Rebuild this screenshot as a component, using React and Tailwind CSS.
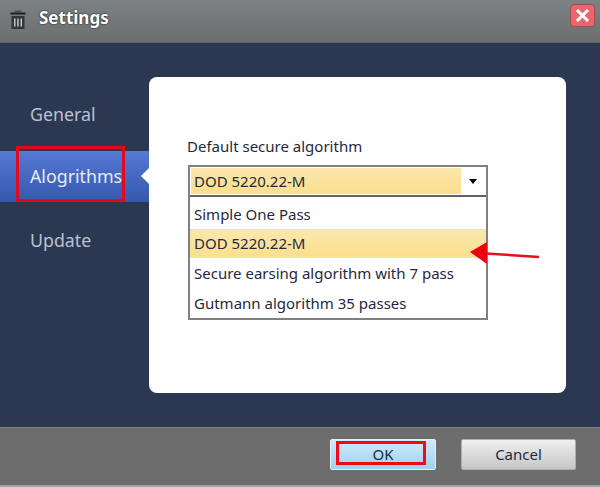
const font = { fontFamily: '"Noto Sans", sans-serif' };

function TrashIcon() {
  return (
    <svg width="16" height="20" viewBox="0 0 16 20" className="shrink-0 mt-[6px]">
      <rect x="0.5" y="2.5" width="15" height="2" fill="#1c1f22" />
      <rect x="4.5" y="0.5" width="7" height="1.5" fill="#4f5255" />
      <rect x="1.5" y="6" width="13" height="13" fill="#33373a" />
      <rect x="4" y="8.5" width="1.5" height="8" fill="#c4c6c8" />
      <rect x="7.2" y="8.5" width="1.5" height="8" fill="#c4c6c8" />
      <rect x="10.5" y="8.5" width="1.5" height="8" fill="#c4c6c8" />
    </svg>
  );
}

function CloseButton() {
  return (
    <div className="w-[25px] h-[23px] rounded-[4px] border border-[#a84a50] bg-[#e8666c] flex items-center justify-center">
      <svg width="15" height="13" viewBox="0 0 15 13">
        <path d="M3 2 L12 11 M12 2 L3 11" stroke="#ffffff" strokeWidth="3" strokeLinecap="square" />
      </svg>
    </div>
  );
}

function Option({ children, active }) {
  return (
    <div
      className={
        active
          ? "h-[29px] flex items-center pl-[4px] border-y border-[#dfe2e8] bg-gradient-to-b from-[#fbe7ae] to-[#fbdf8c]"
          : "h-[30px] flex items-center pl-[4px]"
      }
    >
      {children}
    </div>
  );
}

export default function App() {
  return (
    <div className="w-[600px] h-[487px] flex flex-col overflow-hidden relative" style={font}>
      <div className="h-[43px] shrink-0 flex items-start pt-[4px] pl-[10px] pr-[5px] gap-[13px] bg-gradient-to-b from-[#7c8286] to-[#6d6e6e] border-b border-[#5a6070]">
        <TrashIcon />
        <span className="text-white font-bold text-[17px] leading-[24px] mt-[2px] flex-1 [text-shadow:0_0_2px_#000]">Settings</span>
        <CloseButton />
      </div>

      <div className="flex-1 flex bg-[#2c3752] pt-[34px] pb-[34px] pr-[34px]">
        <div className="w-[149px] shrink-0 pt-[20px] text-[17.8px] text-[#b9c2d0]">
          <div className="h-[34px] flex items-center pl-[30px]">General</div>
          <div className="relative h-[51px] mt-[20px] flex items-center pl-[30px] text-[#e6ebf5] bg-gradient-to-b from-[#5679d6] to-[#3557ac]">
            Alogrithms
            <div className="absolute right-0 top-[17px] w-0 h-0 border-y-[8px] border-y-transparent border-r-[8px] border-r-white" />
          </div>
          <div className="h-[34px] mt-[21px] flex items-center pl-[30px]">Update</div>
        </div>

        <div className="flex-1 bg-white rounded-[8px] pl-[39px] pt-[59px]">
          <div className="-ml-[1px] text-[15px] leading-[20px] text-[#1f2a3c] mb-[9px]">Default secure algorithm</div>
          <div className="w-[300px] border-2 border-[#808080] text-[15px] text-[#1f2a3c]">
            <div className="h-[30px] flex items-center pl-[1px] pr-[1px] border-b-2 border-[#606265]">
              <div className="w-[270px] h-[26px] flex items-center pl-[3px] bg-gradient-to-b from-[#fbe7ae] to-[#fbdf8c]">
                DOD 5220.22-M
              </div>
              <div className="flex-1 flex justify-center">
                <div className="w-0 h-0 border-x-[4px] border-x-transparent border-t-[5px] border-t-black" />
              </div>
            </div>
            <div className="pt-[2px]">
              <Option>Simple One Pass</Option>
              <Option active>DOD 5220.22-M</Option>
              <Option>Secure earsing algorithm with 7 pass</Option>
              <Option>Gutmann algorithm 35 passes</Option>
            </div>
          </div>
        </div>
      </div>

      <div className="h-[60px] shrink-0 bg-[#6d6d6d] border-t border-[#7c7f84] border-b-2 border-b-[#a4a4a4] flex items-start justify-end gap-[25px] pt-[11px] pr-[24px] text-[15px] text-[#1f2a3c]">
        <button className="w-[106px] h-[31px] rounded-[2px] border border-[#e4eef6] bg-gradient-to-b from-[#cfe9fa] to-[#9fd2f2] flex items-center justify-center">
          OK
        </button>
        <button className="w-[115px] h-[31px] rounded-[2px] border border-[#aeaeae] bg-gradient-to-b from-[#f0f0f0] to-[#c6c6c6] flex items-center justify-center">
          Cancel
        </button>
      </div>

      {/* annotations */}
      <div className="absolute left-[16px] top-[146px] w-[109px] h-[56px] border-[3px] border-[#e00a1e]" />
      <div className="absolute left-[336px] top-[441px] w-[90px] h-[24px] border-[3px] border-[#f00a14]" />
      <svg className="absolute left-[468px] top-[240px]" width="74" height="28" viewBox="0 0 74 28">
        <path d="M2 12 L19 2 L19 24 Z" fill="#f0000f" />
        <path d="M18 13.5 L71 17" stroke="#e8101c" strokeWidth="2.5" />
      </svg>
    </div>
  );
}
